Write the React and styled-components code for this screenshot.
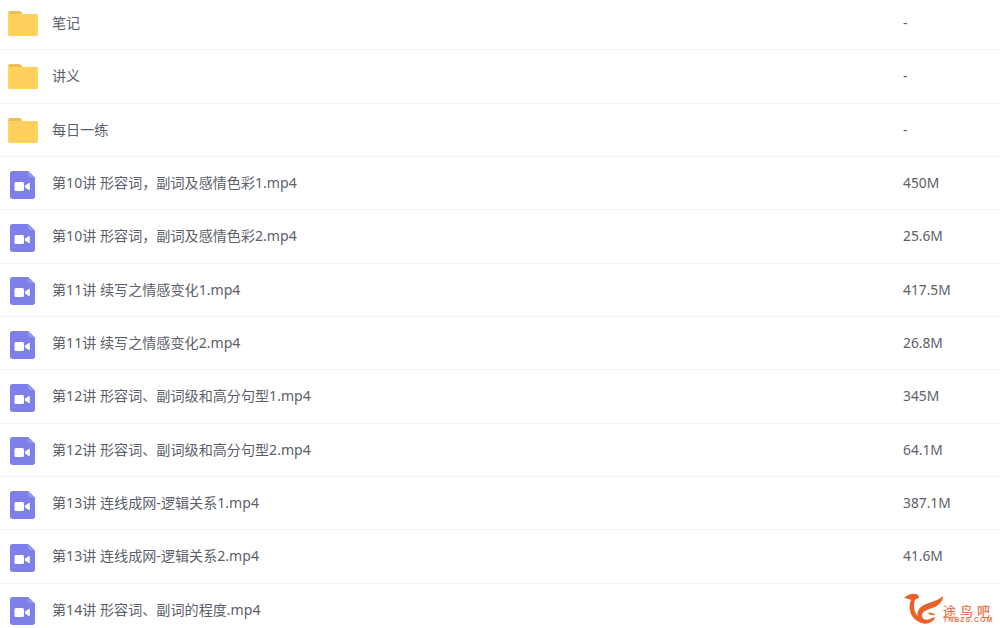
import React from "react";
import styled, { createGlobalStyle } from "styled-components";

const Global = createGlobalStyle`
  html, body { margin: 0; padding: 0; background: #fff; }
  body { width: 1000px; height: 628px; overflow: hidden; font-family: "Noto Sans", "Noto Sans CJK SC", sans-serif; }
`;
const Page = styled.div`
  position: relative;
  width: 1000px;
  height: 628px;
  overflow: hidden;
  background: #fff;
`;
const List = styled.ul`
  list-style: none;
  margin: -3.05px 0 0;
  padding: 0;
`;
const Row = styled.li`
  box-sizing: border-box;
  height: 53.33px;
  display: grid;
  grid-template-columns: 52px 1fr 97px;
  align-items: center;
  border-bottom: 1px solid #f5f5f6;
`;
const IconCell = styled.div`
  display: flex;
  justify-content: center;
  padding-top: ${p => (p.$video ? "3px" : "1px")};
  width: ${p => (p.$video ? "45px" : "46px")};
`;
const Name = styled.span`
  font-size: 14.1px;
  line-height: 20px;
  color: #5c5f6a;
  white-space: nowrap;
`;
const Size = styled.span`
  font-size: 13.8px;
  line-height: 20px;
  color: #5c5f6a;
`;
const Watermark = styled.div`
  position: absolute;
  left: 904px;
  top: 593px;
  display: flex;
`;
const WmText = styled.div`
  display: flex;
  flex-direction: column;
  padding-top: 11px;
`;
const WmTitle = styled.span`
  font-family: "Noto Sans CJK SC", sans-serif;
  font-size: 13px;
  font-weight: 500;
  line-height: 13px;
  letter-spacing: 4px;
  color: #e8764a;
  white-space: nowrap;
`;
const WmSub = styled.span`
  font-family: "Liberation Sans", sans-serif;
  font-size: 7px;
  line-height: 6px;
  font-weight: 700;
  letter-spacing: 0.95px;
  color: #e8764a;
  white-space: nowrap;
`;

const Folder = () => (
  <svg width="30" height="25" viewBox="0 0 31 26">
    <path d="M0 2.2C0 1 .9 0 2 0h9.6c1 0 1.6.5 2.2 1.2L15 3H0z" fill="#e9bd59" />
    <path d="M0 4.500C0 3.600.7 3 1.500 3H29.500c.9 0 1.500.7 1.500 1.500V24.500c0 .9-.7 1.500-1.500 1.500H1.500C.7 26 0 25.300 0 24.500z" fill="#ffd05c" />
  </svg>
);
const Video = () => (
  <svg width="25" height="28" viewBox="0 0 25 28">
    <path d="M2.500 0H18L25 6.500V25.500c0 1.400-1.100 2.500-2.500 2.500H2.500C1.100 28 0 26.900 0 25.500V2.500C0 1.100 1.100 0 2.500 0z" fill="#7f7fea" />
    <path d="M18 0L25 6.500H20.500c-1.400 0-2.500-1.100-2.500-2.500z" fill="#9494ef" />
    <rect x="4.500" y="11" width="9.500" height="9" rx="1.500" fill="#fff" />
    <path d="M15 14.500l4-2.600c.4-.3.800 0 .8.400v6.400c0 .4-.4.700-.8.400L15 16.500z" fill="#fff" />
  </svg>
);
const Logo = () => (
  <svg width="39" height="33" viewBox="0 0 39 33" style={{ display: "block", flex: "none" }}>
    <path d="M0 5c3-3 8-5 12-4 2 .5 3 2 3 4l-3 1c-1 .5-2 3-2 7 0 7 5 14 13 17-7 1-13-3-16-9C5 16 5 11 7 7 5 6 2 5 0 5z" fill="#e8622a" />
    <path d="M39 3c0 6-5 10-11 12-5 2-10 3-10 8 0 3 4 5 8 3 2-1 4-2 5-1-2 4-8 7-13 5-5-2-6-9-3-14 5-7 17-6 24-13z" fill="#e8622a" />
    <path d="M24 20c3-1 6 0 7 2-3 .5-6 0-7-2z" fill="#ee7a43" />
  </svg>
);

const items = [
  ["f", "笔记", "-"],
  ["f", "讲义", "-"],
  ["f", "每日一练", "-"],
  ["v", "第10讲 形容词，副词及感情色彩1.mp4", "450M"],
  ["v", "第10讲 形容词，副词及感情色彩2.mp4", "25.6M"],
  ["v", "第11讲 续写之情感变化1.mp4", "417.5M"],
  ["v", "第11讲 续写之情感变化2.mp4", "26.8M"],
  ["v", "第12讲 形容词、副词级和高分句型1.mp4", "345M"],
  ["v", "第12讲 形容词、副词级和高分句型2.mp4", "64.1M"],
  ["v", "第13讲 连线成网-逻辑关系1.mp4", "387.1M"],
  ["v", "第13讲 连线成网-逻辑关系2.mp4", "41.6M"],
  ["v", "第14讲 形容词、副词的程度.mp4", ""],
];

export default function App() {
  return (
    <Page>
      <Global />
      <List>
        {items.map(([kind, name, size]) => (
          <Row key={name}>
            <IconCell $video={kind === "v"}>{kind === "f" ? <Folder /> : <Video />}</IconCell>
            <Name>{name}</Name>
            <Size>{size}</Size>
          </Row>
        ))}
      </List>
      <Watermark>
        <Logo />
        <WmText>
          <WmTitle>途鸟吧</WmTitle>
          <WmSub>TNBZS.COM</WmSub>
        </WmText>
      </Watermark>
    </Page>
  );
}
